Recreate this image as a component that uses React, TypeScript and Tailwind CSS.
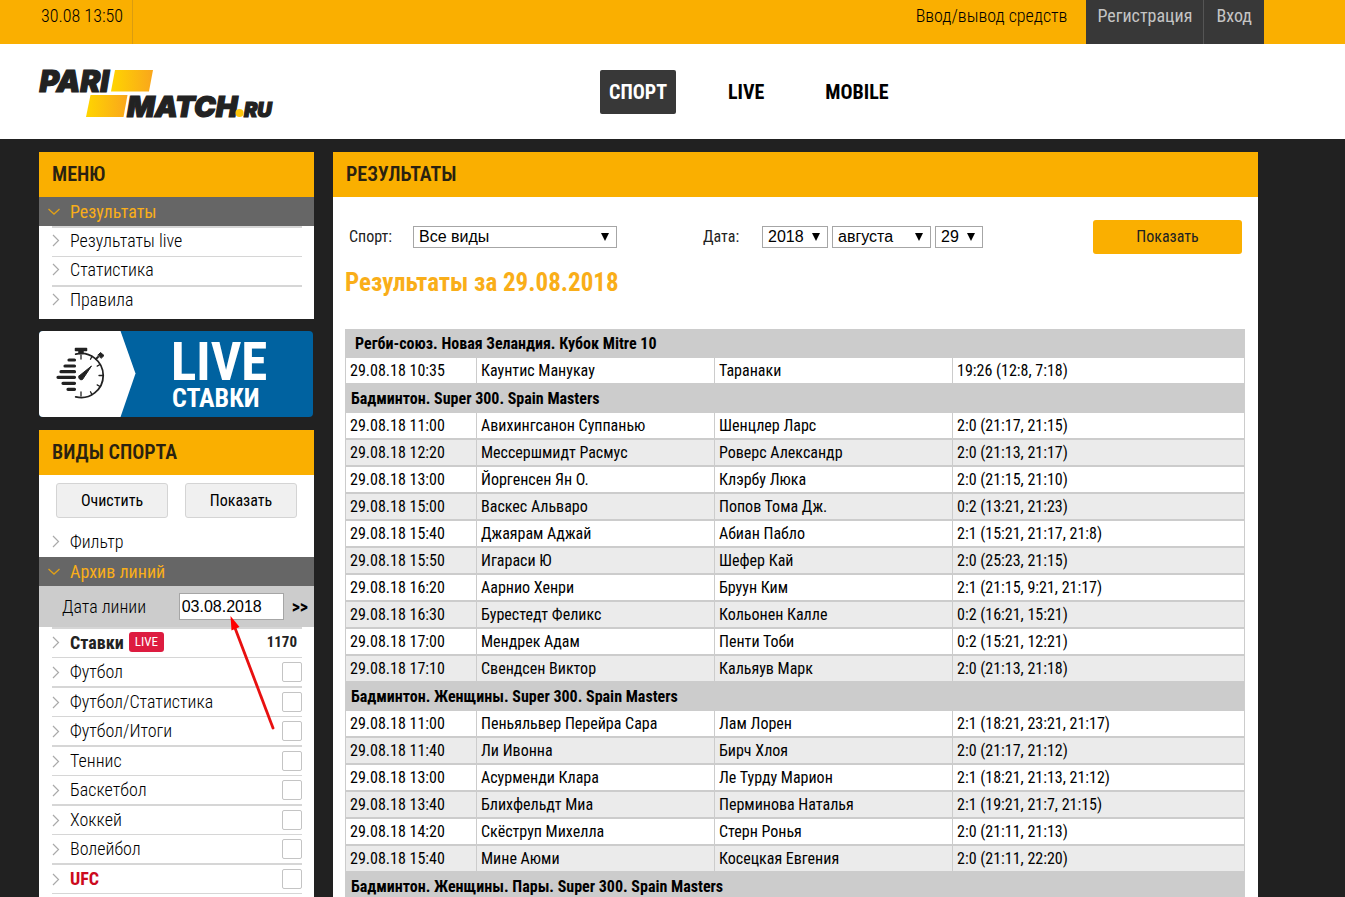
import type { ReactNode } from 'react';

const menuItems = ['Результаты live', 'Статистика', 'Правила'];

const sports = [
  { name: 'Футбол' },
  { name: 'Футбол/Статистика' },
  { name: 'Футбол/Итоги' },
  { name: 'Теннис' },
  { name: 'Баскетбол' },
  { name: 'Хоккей' },
  { name: 'Волейбол' },
  { name: 'UFC', highlighted: true },
];

type Match = [time: string, home: string, away: string, score: string];

const groups: { title: string; matches: Match[] }[] = [
  {
    title: 'Регби-союз. Новая Зеландия. Кубок Mitre 10',
    matches: [['10:35', 'Каунтис Манукау', 'Таранаки', '19:26 (12:8, 7:18)']],
  },
  {
    title: 'Бадминтон. Super 300. Spain Masters',
    matches: [
      ['11:00', 'Авихингсанон Суппанью', 'Шенцлер Ларс', '2:0 (21:17, 21:15)'],
      ['12:20', 'Мессершмидт Расмус', 'Роверс Александр', '2:0 (21:13, 21:17)'],
      ['13:00', 'Йоргенсен Ян О.', 'Клэрбу Люка', '2:0 (21:15, 21:10)'],
      ['15:00', 'Васкес Альваро', 'Попов Тома Дж.', '0:2 (13:21, 21:23)'],
      ['15:40', 'Джаярам Аджай', 'Абиан Пабло', '2:1 (15:21, 21:17, 21:8)'],
      ['15:50', 'Игараси Ю', 'Шефер Кай', '2:0 (25:23, 21:15)'],
      ['16:20', 'Аарнио Хенри', 'Бруун Ким', '2:1 (21:15, 9:21, 21:17)'],
      ['16:30', 'Бурестедт Феликс', 'Кольонен Калле', '0:2 (16:21, 15:21)'],
      ['17:00', 'Мендрек Адам', 'Пенти Тоби', '0:2 (15:21, 12:21)'],
      ['17:10', 'Свендсен Виктор', 'Кальяув Марк', '2:0 (21:13, 21:18)'],
    ],
  },
  {
    title: 'Бадминтон. Женщины. Super 300. Spain Masters',
    matches: [
      ['11:00', 'Пеньяльвер Перейра Сара', 'Лам Лорен', '2:1 (18:21, 23:21, 21:17)'],
      ['11:40', 'Ли Ивонна', 'Бирч Хлоя', '2:0 (21:17, 21:12)'],
      ['13:00', 'Асурменди Клара', 'Ле Турду Марион', '2:1 (18:21, 21:13, 21:12)'],
      ['13:40', 'Блихфельдт Миа', 'Перминова Наталья', '2:1 (19:21, 21:7, 21:15)'],
      ['14:20', 'Скёструп Михелла', 'Стерн Ронья', '2:0 (21:11, 21:13)'],
      ['15:40', 'Мине Аюми', 'Косецкая Евгения', '2:0 (21:11, 22:20)'],
    ],
  },
  { title: 'Бадминтон. Женщины. Пары. Super 300. Spain Masters', matches: [] },
];

function Logo() {
  return (
    <a href="#" aria-label="Parimatch.ru" className="block">
      <svg width="240" height="55" viewBox="0 -5 240 55" className="overflow-visible font-['Inter',sans-serif] font-black italic">
        <defs>
          <linearGradient id="plate">
            <stop offset="0" stopColor="#ffd500" />
            <stop offset="1" stopColor="#f9a61c" />
          </linearGradient>
        </defs>
        <path d="M76 1h38l-4 21.500H72z" fill="url(#plate)" />
        <path d="M51.500 26h37l-4 22H47z" fill="url(#plate)" />
        <g fill="#222" stroke="#222" strokeWidth="1.200">
          <text x="0.500" y="22.500" fontSize="30">PARI</text>
          <text x="88" y="48" fontSize="29">MATCH</text>
          <text x="205" y="48" fontSize="20">RU</text>
        </g>
        <circle cx="200.500" cy="44" r="4" fill="#fdc50b" />
      </svg>
    </a>
  );
}

function Chevron({ open = false }: { open?: boolean }) {
  return open ? (
    <svg width="12" height="7" viewBox="0 0 12 7" fill="none" stroke="#e0a018" strokeWidth="1.300">
      <path d="M.5 1 6 6l5.500-5" />
    </svg>
  ) : (
    <svg width="8" height="13" viewBox="0 0 8 13" fill="none" stroke="#aaa" strokeWidth="1.200">
      <path d="m1 1 5.500 5.500L1 12" />
    </svg>
  );
}

function PanelTitle({ children }: { children: ReactNode }) {
  return <h2 className="bg-[#faaf00] px-[13px] text-[20px] leading-[45px] font-semibold text-[#2a2210]">{children}</h2>;
}

function ActiveItem({ children }: { children: ReactNode }) {
  return (
    <a href="#" className="flex h-[29px] items-center gap-[10px] bg-[#666] pl-[9px] text-[18px] font-normal text-[#f9ae19]">
      <Chevron open />
      {children}
    </a>
  );
}

function Stopwatch() {
  return (
    <g stroke="#222" fill="none" strokeLinecap="round">
      <path d="M36.700 23.200A22 22 0 1 1 36.700 65.800" strokeWidth="1.800" />
      <path d="M36.500 17.500h11v2h-11z M40 20v2.500h4V20" fill="#222" strokeWidth="1.500" strokeLinejoin="round" />
      <path d="m57 28 2-2" strokeWidth="2" />
      <path d="m59 24 2.500-2.500 3.500 3-2.500 2.500z" fill="#222" strokeWidth="1" />
      <path
        d="M42 24v4M42 61v4M60 44.500h4M53 25.400l-1.500 2.800M61 33.500l-2.800 1.600M61 55.500l-2.800-1.600M53 63.600l-1.500-2.800"
        strokeWidth="1.300"
      />
      <path d="M40 45 52.500 35 43.500 48.500a2.600 2.600 0 0 1-3.500-3.500z" fill="#222" strokeWidth="1" />
      <path d="M30 29h5.500M26 35h9.500M22 40.700h13.500M19 46.300h16.500M24 52.300h11.500M29 58.300h6.500" strokeWidth="3.200" />
    </g>
  );
}

function LiveBanner() {
  return (
    <a href="#" className="mr-px block overflow-hidden rounded-[4px] bg-[#0062a0]">
      <svg width="274" height="86" viewBox="0 0 274 86" className="font-['Roboto_Condensed',sans-serif] font-bold">
        <path d="M0 0h81.500l15 42.500L81.500 86H0z" fill="#fff" />
        <Stopwatch />
        <text x="132" y="49" fontSize="53" fill="#fff">LIVE</text>
        <text x="133" y="76" fontSize="26" fill="#fff">СТАВКИ</text>
      </svg>
    </a>
  );
}

function Select({ label, value, width }: { label: string; value: string; width: string }) {
  return (
    <span className={`relative block ${width}`}>
      <select
        aria-label={label}
        className="block h-[22px] w-full appearance-none border border-[#a6a6a6] bg-white pl-[5px] font-['Liberation_Sans',sans-serif] text-[16px] leading-[20px] text-black"
      >
        <option>{value}</option>
      </select>
      <svg width="8" height="8" viewBox="0 0 8 8" className="pointer-events-none absolute top-[7px] right-[8px]">
        <path d="M0 0h8L4 8z" />
      </svg>
    </span>
  );
}

function Sidebar() {
  return (
    <aside className="flex w-[275px] shrink-0 flex-col text-[18px] font-light text-black">
      <nav className="bg-white pb-[4px]">
        <PanelTitle>МЕНЮ</PanelTitle>
        <ActiveItem>Результаты</ActiveItem>
        <ul className="mr-[12px] ml-[13px] border-t-2 border-[#d6d6d6]">
          {menuItems.map((item) => (
            <li key={item} className="border-[#d6d6d6] even:border-b-2 first:border-b">
              <a href="#" className="flex h-[28px] items-center gap-[10px] pb-[3px]">
                <Chevron />
                {item}
              </a>
            </li>
          ))}
        </ul>
      </nav>

      <div className="mt-[12px]">
        <LiveBanner />
      </div>

      <section className="mt-[13px] grow bg-white">
        <PanelTitle>ВИДЫ СПОРТА</PanelTitle>
        <div className="flex gap-[17px] px-[17px] pt-[8px] pb-[10px]">
          <button className="h-[35px] flex-1 rounded-[3px] border border-[#d4d4d4] bg-[#f0f0f0] text-[16px] font-normal">Очистить</button>
          <button className="h-[35px] flex-1 rounded-[3px] border border-[#d4d4d4] bg-[#f0f0f0] text-[16px] font-normal">Показать</button>
        </div>
        <a href="#" className="mr-[12px] ml-[13px] flex h-[29px] items-center gap-[10px] pb-[2px]">
          <Chevron />
          Фильтр
        </a>
        <ActiveItem>Архив линий</ActiveItem>
        <div className="relative flex h-[41px] items-center bg-[#ccc] pr-[6px] pl-[23px]">
          <label htmlFor="line-date" className="grow">Дата линии</label>
          <input
            id="line-date"
            defaultValue="03.08.2018"
            className="h-[27px] w-[105px] border border-[#a6a6a6] bg-white px-[2px] font-['Liberation_Sans',sans-serif] text-[16px] font-normal text-black"
          />
          <button aria-label="Перейти" className="pl-[8px] font-bold">&gt;&gt;</button>
          <svg
            width="52"
            height="120"
            viewBox="0 0 52 120"
            className="pointer-events-none absolute top-[28px] left-[186px] z-10"
          >
            <path d="M10 14 48 114" stroke="#e81010" strokeWidth="2.800" strokeLinecap="round" />
            <path d="m5.500 2 9 11-8 3.500z" fill="#f00" />
          </svg>
        </div>
        <div className="mr-[12px] ml-[13px] flex h-[31px] items-center gap-[10px] border-y border-t-2 border-[#d6d6d6] pr-[5px] pb-[2px] font-bold text-[#222]">
          <Chevron />
          <span className="flex items-center gap-[5px]">
            <a href="#">Ставки</a>
            <span className="h-[20px] rounded-[3px] bg-[#dd1c40] px-[6px] text-[13px] leading-[20px] font-normal text-white">LIVE</span>
          </span>
          <span className="ml-auto text-[15px]">1170</span>
        </div>
        <ul className="mr-[12px] ml-[13px] pb-[3px]">
          {sports.map(({ name, highlighted }) => (
            <li key={name} className="border-[#d6d6d6] odd:border-b-2 even:border-b">
              <label className="flex h-[28px] items-center gap-[10px]">
                <Chevron />
                <span className={highlighted ? 'pb-[2px] font-bold text-[#cc0a1e]' : 'pb-[2px]'}>{name}</span>
                <input type="checkbox" className="ml-auto size-[20px] appearance-none rounded-[2px] border border-[#c4c4c4] bg-white" />
              </label>
            </li>
          ))}
        </ul>
      </section>
    </aside>
  );
}

function ResultsTable() {
  return (
    <table className="w-full table-fixed border-separate border-spacing-0 border-r border-[#ccc] text-left text-[16px] text-black">
      <colgroup>
        <col className="w-[131px]" />
        <col className="w-[238px]" />
        <col className="w-[238px]" />
        <col />
      </colgroup>
      {groups.map(({ title, matches }, index) => (
        <tbody key={title}>
          <tr>
            <th
              colSpan={4}
              className={
                index === 0
                  ? 'h-[29px] bg-[#ccc] pl-[10px] leading-[28px] font-bold'
                  : 'bg-[#ccc] pl-[6px] leading-[28px] font-bold'
              }
            >
              {title}
            </th>
          </tr>
          {matches.map(([time, home, away, score]) => (
            <tr key={time + home} className="odd:bg-[#ebebeb]">
              {[`29.08.18 ${time}`, home, away, score].map((cell) => (
                <td key={cell} className="border-b-2 border-l border-[#ccc] pl-[4px] leading-[25px]">
                  {cell}
                </td>
              ))}
            </tr>
          ))}
        </tbody>
      ))}
    </table>
  );
}

export default function App() {
  return (
    <div className="min-h-screen bg-[#212121] font-['Roboto_Condensed',Roboto,sans-serif]">
      <header>
        <div className="flex h-[44px] bg-[#faaf00] pr-[81px] pl-[39px] text-[18px] leading-[32px] text-black">
          <time className="border-r border-[#d99c10] pr-[9px] pl-[2px] font-light">30.08 13:50</time>
          <a href="#" className="ml-auto pr-[19px] font-light">Ввод/вывод средств</a>
          <a href="#" className="border-r border-[#555] bg-[#383838] px-[11px] text-[#c4c4c4]">Регистрация</a>
          <a href="#" className="bg-[#383838] px-[12px] text-[#c4c4c4]">Вход</a>
        </div>
        <div className="flex h-[95px] items-center bg-white pl-[39px]">
          <Logo />
          <nav className="ml-[321px] flex gap-[43px] text-[20px] leading-[44px] font-bold text-black">
            <a href="#" className="rounded-[2px] bg-[#383838] px-[9px] text-white">СПОРТ</a>
            <a href="#" className="px-[9px]">LIVE</a>
            <a href="#" className="px-[9px]">MOBILE</a>
          </nav>
        </div>
      </header>

      <div className="flex gap-[19px] pt-[13px] pr-[87px] pl-[39px]">
        <Sidebar />
        <main className="min-w-0 grow bg-white">
          <PanelTitle>РЕЗУЛЬТАТЫ</PanelTitle>
          <form className="flex items-center pt-[23px] pr-[16px] pl-[16px] text-[16px] text-[#222]">
            <span className="w-[64px]">Спорт:</span>
            <Select label="Спорт" value="Все виды" width="w-[204px]" />
            <span className="ml-[86px] w-[59px]">Дата:</span>
            <div className="flex gap-[4px]">
              <Select label="Год" value="2018" width="w-[66px]" />
              <Select label="Месяц" value="августа" width="w-[99px]" />
              <Select label="День" value="29" width="w-[48px]" />
            </div>
            <button type="button" className="ml-auto h-[34px] w-[149px] rounded-[3px] bg-[#faaf00]">Показать</button>
          </form>
          <div className="pr-[13px] pl-[12px]">
            <h1 className="pt-[11px] pb-[28px] text-[25px] leading-[36px] font-bold text-[#f9ae19]">Результаты за 29.08.2018</h1>
            <ResultsTable />
          </div>
        </main>
      </div>
    </div>
  );
}
